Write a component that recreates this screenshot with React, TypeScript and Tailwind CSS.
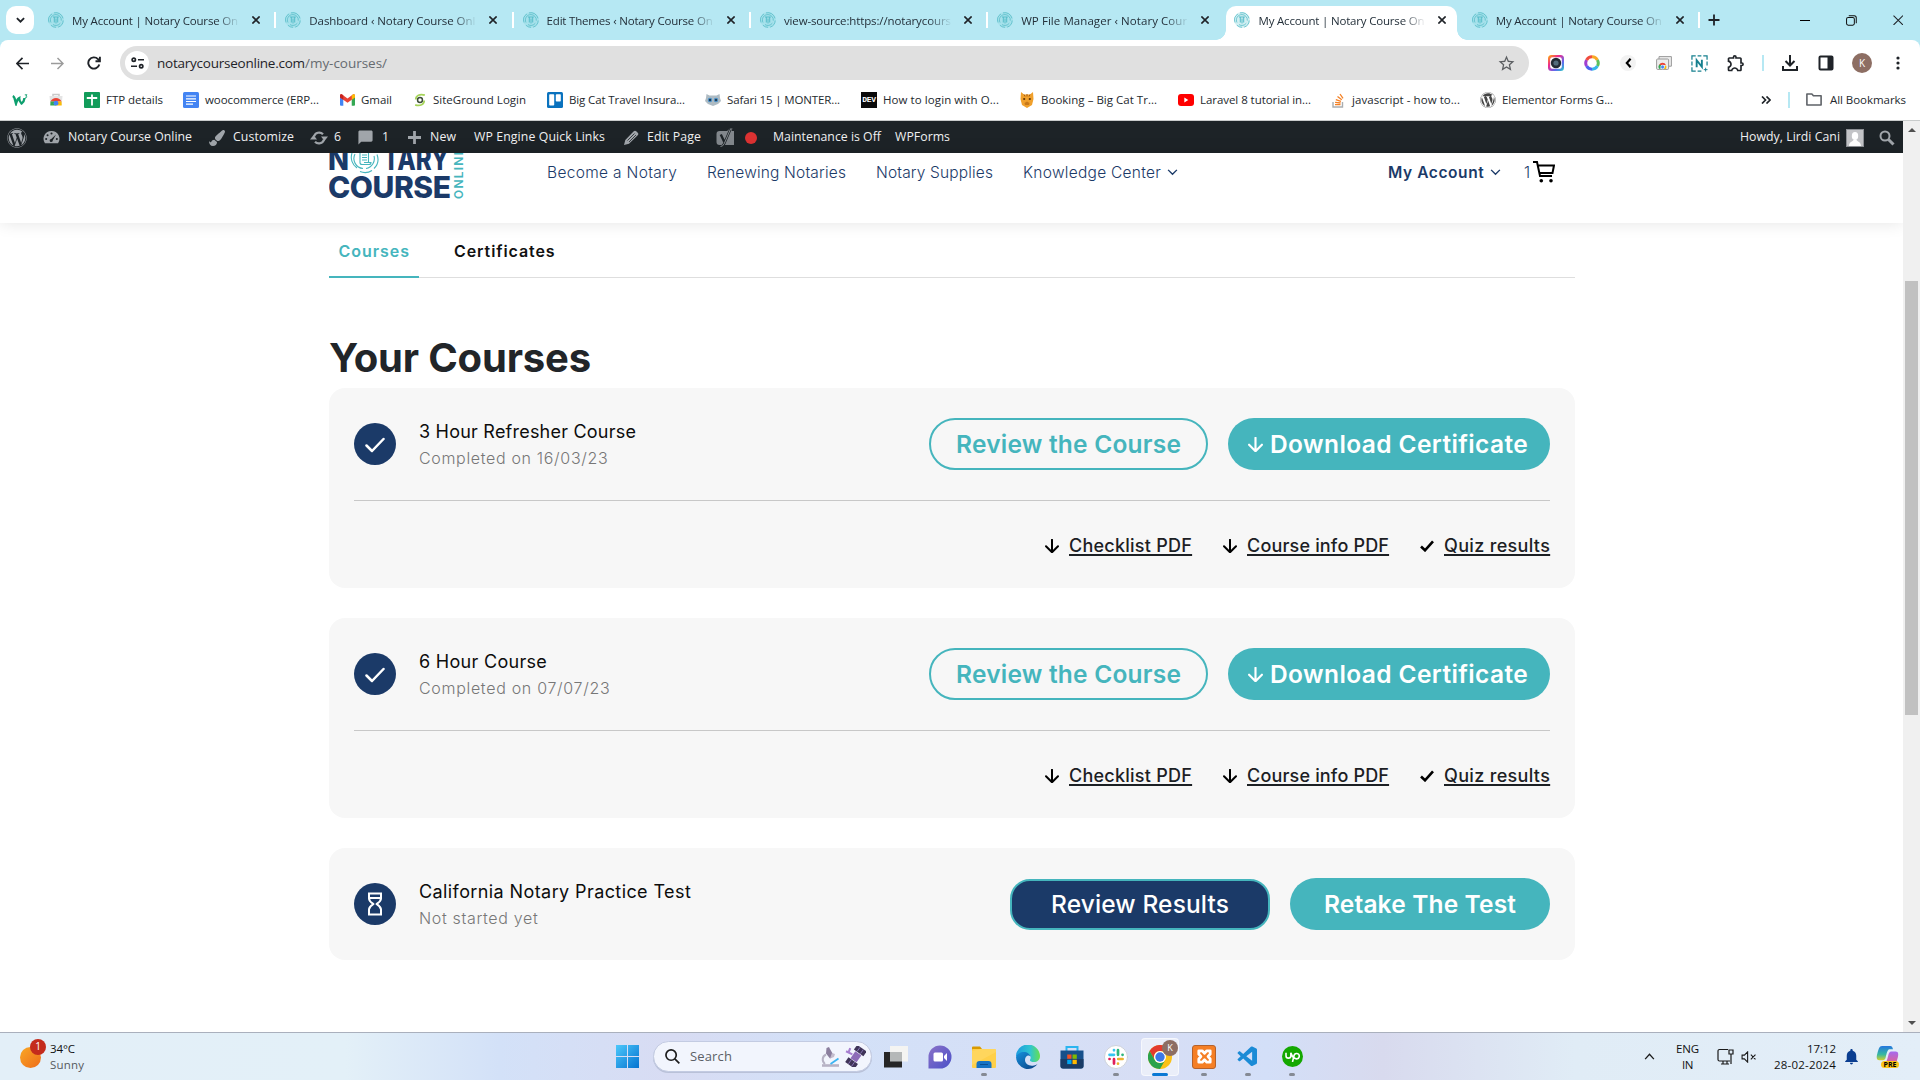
import { useLayoutEffect, useRef, type ReactNode } from "react";
import { FaWordpress, FaPaintBrush } from "react-icons/fa";
import { MdModeComment, MdOutlineExtension, MdStarBorder, MdNotifications } from "react-icons/md";
import { VscVscode } from "react-icons/vsc";

/** Single-line label whose tracking is adjusted so that it spans `w` pixels. */
function Fit({ w, className = "", children }: { w: number; className?: string; children: ReactNode }) {
  const ref = useRef<HTMLSpanElement>(null);
  useLayoutEffect(() => {
    const el = ref.current;
    if (!el) return;
    el.style.width = "max-content";
    el.style.letterSpacing = "0px";
    const natural = el.getBoundingClientRect().width;
    const n = (el.textContent ?? "").length;
    el.style.letterSpacing = `${(w - natural) / Math.max(1, n - 0.5)}px`;
    el.style.width = `${w}px`;
  }, [w]);
  return (
    <span ref={ref} className={"inline-block shrink-0 whitespace-nowrap " + className}>
      {children}
    </span>
  );
}

function Fingerprint() {
  return (
    <svg viewBox="0 0 16 16" className="h-4 w-4 shrink-0" fill="none" stroke="#55bcc8" strokeWidth="0.8">
      <circle cx="8" cy="8" r="7.9" fill="#8fd6de" stroke="none" opacity=".4" />
      <path d="M1 10.5A7.3 7.3 0 0 1 4 1.9M6 .9a7.3 7.3 0 0 1 9 5.500M15.200 8.500a7.300 7.300 0 0 1-5 6.600M8 15.300a7.300 7.300 0 0 1-5-2" />
      <path d="M3 10.500A5.400 5.400 0 0 1 8 2.600a5.400 5.400 0 0 1 5.300 6M12.300 11.200A5.400 5.400 0 0 1 5 12.600" />
      <path d="M5 5h5.800M6.300 5v5.500M9.700 5v5.500M8 6.500v5" strokeWidth="1" />
    </svg>
  );
}

function X({ size = 8 }: { size?: number }) {
  return (
    <svg viewBox="0 0 10 10" width={size} height={size} stroke="#1f2328" strokeWidth={size > 9 ? 1 : 2} fill="none">
      <path d="M.5.5l9 9M9.500.5l-9 9" />
    </svg>
  );
}

const tabs = [
  { t: "My Account | Notary Course On", w: 166, sep: true },
  { t: "Dashboard ‹ Notary Course Onl", w: 166, sep: true },
  { t: "Edit Themes ‹ Notary Course On", w: 166, sep: true },
  { t: "view-source:https://notarycours", w: 167, sep: true },
  { t: "WP File Manager ‹ Notary Cour", w: 166 },
  { t: "My Account | Notary Course On", w: 166, active: true },
  { t: "My Account | Notary Course On", w: 166, sep: true },
];

function TabStrip() {
  return (
    <div className="flex h-10 bg-[#b6e8f3] pl-1.5">
      <div className="mt-1.5 mr-1.5 flex h-7 w-7 shrink-0 items-center justify-center rounded-[10px] bg-white">
        <svg viewBox="0 0 10 6" className="h-[6px] w-[9px]" fill="none" stroke="#1f2328" strokeWidth="2">
          <path d="M1 .8l4 4 4-4" />
        </svg>
      </div>
      {tabs.map((tab, i) => (
        <div key={i} className="flex h-10 w-[237.3px] shrink-0 pt-1.5">
          <div
            className={
              "relative flex w-[230.4px] items-center pb-1.5 pl-2 " + (tab.active ? "rounded-t-[10px] bg-white" : "")
            }
          >
            {tab.active && (
              <>
                <span className="absolute bottom-0 -left-2.5 h-2.5 w-2.5 bg-[radial-gradient(circle_at_0_0,transparent_9.5px,white_10px)]" />
                <span className="absolute -right-2.5 bottom-0 h-2.5 w-2.5 bg-[radial-gradient(circle_at_100%_0,transparent_9.5px,white_10px)]" />
              </>
            )}
            <Fingerprint />
            <div className="ml-2 w-[168px] pt-px text-[11.5px] leading-4 text-[#24303a] [mask-image:linear-gradient(to_right,black_86%,transparent)]">
              <Fit w={tab.w}>{tab.t}</Fit>
            </div>
            <span className="ml-3">
              <X />
            </span>
          </div>
          {tab.sep && <div className="mt-1.5 ml-1 h-4 w-0.5 bg-white" />}
        </div>
      ))}
      <svg viewBox="0 0 12 12" className="mt-3.5 ml-[7px] h-3 w-3 shrink-0" stroke="#1f2328" strokeWidth="1.8">
        <path d="M6 .5v11M.5 6h11" />
      </svg>
      <div className="ml-auto flex h-10 items-center pr-[17px]">
        <div className="h-px w-2.5 bg-black" />
        <svg viewBox="0 0 12 12" className="ml-9 h-[11px] w-[11px]" fill="none" stroke="#111" strokeWidth="1.1">
          <rect x=".6" y="2.6" width="8.5" height="8.6" rx="1.8" />
          <path d="M3 .7h6a2.2 2.2 0 0 1 2.2 2.2v6" />
        </svg>
        <span className="ml-9 block">
          <X size={10.5} />
        </span>
      </div>
    </div>
  );
}

function Toolbar() {
  return (
    <div className="bg-[#b6e8f3]">
      <div className="flex h-[41px] items-center rounded-t-lg bg-white pt-[5px] pl-4">
        <svg viewBox="0 0 14 14" className="h-[13px] w-[13px]" fill="none" stroke="#1f2328" strokeWidth="1.8">
          <path d="M14 7H1.500M7 1L1 7l6 6" />
        </svg>
        <svg viewBox="0 0 14 14" className="ml-[22px] h-[13px] w-[13px]" fill="none" stroke="#9b9b9b" strokeWidth="1.6">
          <path d="M0 7h12.500M7 1l6 6-6 6" />
        </svg>
        <svg viewBox="0 0 14 14" className="ml-[23px] h-[14px] w-[14px]" fill="none" stroke="#1f2328" strokeWidth="1.9">
          <path d="M12.300 8.500A5.600 5.600 0 1 1 11 3.200l1.500 1.600" />
          <path d="M12.900.8v4.500H8.500" />
        </svg>
        <div className="ml-[19px] flex h-[34px] w-[1409px] shrink-0 items-center rounded-full bg-[#e0e0e0] pl-[5px]">
          <div className="flex h-6 w-6 items-center justify-center rounded-full bg-white">
            <svg viewBox="0 0 14 12" className="h-3 w-[13px]" fill="none" stroke="#1f2328" strokeWidth="1.8">
              <circle cx="3" cy="2.5" r="1.8" />
              <path d="M7.500 2.500H14M0 9.500h6.500" />
              <circle cx="11" cy="9.5" r="1.8" />
            </svg>
          </div>
          <Fit w={148} className="ml-2 text-[13.5px] text-[#1f2328]">
            notarycourseonline.com
          </Fit>
          <Fit w={82} className="text-[13.5px] text-[#666b70]">
            /my-courses/
          </Fit>
          <MdStarBorder className="mr-[13px] ml-auto h-[19px] w-[19px] text-[#5c5f62]" />
        </div>
        <div className="ml-[19px] flex items-center">
          <svg viewBox="0 0 16 16" className="h-4 w-4">
            <defs>
              <linearGradient id="cam" x1="0" y1="0" x2="1" y2="1">
                <stop offset="0" stopColor="#ffb300" />
                <stop offset=".35" stopColor="#f0278c" />
                <stop offset=".7" stopColor="#5e6cf0" />
                <stop offset="1" stopColor="#25d0c0" />
              </linearGradient>
            </defs>
            <rect width="16" height="16" rx="3.5" fill="url(#cam)" />
            <rect x="2.2" y="2.2" width="11.6" height="11.6" rx="2" fill="#fff" />
            <circle cx="8" cy="8" r="5.2" fill="#222a35" />
            <circle cx="8" cy="8" r="2.6" fill="#536b7c" />
          </svg>
          <svg viewBox="0 0 16 16" className="ml-5 h-4 w-4" fill="none" strokeWidth="3">
            <path d="M8 1.800a6.200 6.200 0 0 1 5.400 3.100" stroke="#f9a825" />
            <path d="M13.400 4.900a6.200 6.200 0 0 1 0 6.200" stroke="#5cc05c" />
            <path d="M13.400 11.100A6.200 6.200 0 0 1 8 14.200" stroke="#37b6e8" />
            <path d="M8 14.200a6.200 6.200 0 0 1-5.400-3.100" stroke="#4a63f0" />
            <path d="M2.600 11.100a6.200 6.200 0 0 1 0-6.200" stroke="#a13fd0" />
            <path d="M2.600 4.900A6.200 6.200 0 0 1 8 1.800" stroke="#f04c3e" />
          </svg>
          <div className="ml-5 flex h-4 w-4 items-center justify-center rounded-full bg-[#f2f2f2]">
            <svg viewBox="0 0 8 12" className="h-2.5 w-[7px]" fill="none" stroke="#000" strokeWidth="2.6">
              <path d="M6.500 1L2 6l4.500 5" />
            </svg>
          </div>
          <svg viewBox="0 0 16 14" className="ml-5 h-[14px] w-4" fill="none" stroke="#9a9a9a">
            <path d="M3 3V.6h12.400v9.600H13" fill="#eee" />
            <rect x=".6" y="3" width="12" height="10.400" rx="1" fill="#ededed" />
            <path d="M3.200 12.900a3.400 3.400 0 0 1 1-4.800l2.400 3.500z" fill="#34a853" stroke="none" />
            <path d="M3.200 9a3.600 3.600 0 0 1 6.700 0z" fill="#ea4335" stroke="none" />
            <path d="M9.900 9a4 4 0 0 1 0 4H7z" fill="#fbbc04" stroke="none" />
            <circle cx="6.600" cy="11" r="1.900" fill="#4285f4" stroke="#fff" strokeWidth=".6" />
          </svg>
          <svg viewBox="0 0 18 18" className="ml-[19px] h-[17px] w-[17px]" fill="none" stroke="#16808f">
            <path d="M1 5V1h4M7 1h4M13 1h4v4M17 7v4M1 7v4M1 13v4h4M7 17h4" strokeWidth="1.3" />
            <path d="M6 13V5.500l5.500 7V5" strokeWidth="2" />
            <path d="M15.500 13.500v4M13.500 15.500h4" strokeWidth="1" />
          </svg>
          <MdOutlineExtension className="ml-[18px] h-5 w-5 text-[#1f2328]" />
          <div className="ml-4 h-4 w-0.5 bg-[#b6e8f3]" />
          <svg viewBox="0 0 16 16" className="ml-[18px] h-4 w-4" fill="none" stroke="#1f2328" strokeWidth="2">
            <path d="M8 0v10M3.500 6L8 10.500 12.500 6M1 11v4h14v-4" />
          </svg>
          <svg viewBox="0 0 16 16" className="ml-5 h-4 w-4">
            <rect x="1.5" y="1.5" width="13" height="13" rx="1" fill="none" stroke="#1f2328" strokeWidth="2" />
            <path d="M9.500 1.500h5v13h-5z" fill="#1f2328" />
          </svg>
          <div className="ml-[18px] flex h-5 w-5 items-center justify-center rounded-full bg-[#8d6e63] text-[10px] text-white">
            K
          </div>
          <svg viewBox="0 0 4 14" className="ml-6 h-3.5 w-1" fill="#1f2328">
            <circle cx="2" cy="2" r="1.6" />
            <circle cx="2" cy="7" r="1.6" />
            <circle cx="2" cy="12" r="1.6" />
          </svg>
        </div>
      </div>
    </div>
  );
}

const GmailIcon = (
  <svg viewBox="0 0 16 12" className="h-3 w-[15px]">
    <path d="M0 1.500V11a1 1 0 0 0 1 1h2.500V4z" fill="#4285f4" />
    <path d="M16 1.500V11a1 1 0 0 1-1 1h-2.500V4z" fill="#34a853" />
    <path d="M0 1.500C0 0 1.600-.4 2.600.4L8 4.500 13.400.4C14.400-.4 16 0 16 1.500v1.700L8 9 0 3.200z" fill="#ea4335" />
    <path d="M12.500 1.100l.9-.7C14.400-.4 16 0 16 1.500v1.700l-3.500 2.500z" fill="#fbbc04" />
    <path d="M0 1.500C0 0 1.600-.4 2.600.4l.9.700v4.600L0 3.200z" fill="#c5221f" />
  </svg>
);

const bookmarks: { gap: string; icon: ReactNode; label?: string; w?: number }[] = [
  {
    gap: "ml-3",
    icon: (
      <svg viewBox="0 0 16 12" className="h-3 w-4" fill="none" stroke="#0d9f6e" strokeWidth="2.4">
        <path d="M.8 2C3 3 2.800 6 4 9.500 5 6 6 4.500 7.200 4 7 6 8 8 9.500 9.500 11.500 8 12.300 6.500 12.500 4" />
        <path d="M12.800.8h2.200L13.800 2.100c1.500 0 1.500 2-.8 1.700" strokeWidth=".9" />
      </svg>
    ),
  },
  {
    gap: "ml-5",
    icon: (
      <svg viewBox="0 0 16 16" className="h-4 w-4">
        <path d="M5 5V2.500h6V5" fill="none" stroke="#c9c9c9" strokeWidth="1.5" />
        <path d="M1.500 4h13l-.8 9h-11.400z" fill="#e4e4e4" />
        <path d="M2.500 9.500a6 6 0 0 1 11 0z" fill="#ea4335" />
        <path d="M2.500 9.500h4L8 13.500H2.300z" fill="#34a853" />
        <path d="M13.500 9.500h-4l-2 4h6.200z" fill="#fbbc04" />
        <circle cx="8" cy="11.2" r="2.4" fill="#4285f4" />
      </svg>
    ),
  },
  {
    gap: "ml-5",
    icon: (
      <svg viewBox="0 0 16 16" className="h-4 w-4">
        <rect width="16" height="16" rx="1" fill="#129c5a" />
        <path d="M8 2.500v11M2.800 6h10.400" stroke="#fff" strokeWidth="1.8" />
      </svg>
    ),
    label: "FTP details",
    w: 57,
  },
  {
    gap: "ml-5",
    icon: (
      <svg viewBox="0 0 16 16" className="h-4 w-4">
        <rect width="16" height="16" rx="1.5" fill="#4384f3" />
        <path d="M3 4h10M3 6.800h10M3 9.500h10M3 12.200h7" stroke="#fff" strokeWidth="1.2" />
      </svg>
    ),
    label: "woocommerce (ERP...",
    w: 114,
  },
  { gap: "ml-[21px]", icon: GmailIcon, label: "Gmail", w: 31 },
  {
    gap: "ml-[21px]",
    icon: (
      <svg viewBox="0 0 16 16" className="h-[14px] w-[14px]" fill="none">
        <path d="M13.500 2.500C8 .5 3 3 3.200 7.500M2.500 13.500c5.500 2 10.500-.5 10.300-5" stroke="#a6d45a" strokeWidth="2" />
        <circle cx="8" cy="8" r="2.800" stroke="#3d4c3a" strokeWidth="1.700" />
      </svg>
    ),
    label: "SiteGround Login",
    w: 93,
  },
  {
    gap: "ml-[21px]",
    icon: (
      <svg viewBox="0 0 16 16" className="h-4 w-4">
        <rect width="16" height="16" rx="1.5" fill="#0a72be" />
        <rect x="2.2" y="2.2" width="5" height="11.4" rx=".8" fill="#fff" />
        <rect x="8.8" y="2.2" width="5" height="7.4" rx=".8" fill="#fff" />
      </svg>
    ),
    label: "Big Cat Travel Insura...",
    w: 116,
  },
  {
    gap: "ml-5",
    icon: (
      <svg viewBox="0 0 16 12" className="h-3 w-4">
        <path d="M1.500 0l3 1.500h7l3-1.500.5 4 1 3-3 3-5 2-5-2-3-3 1-3z" fill="#aebbc3" />
        <circle cx="5" cy="6" r="2.2" fill="#4b8fc5" />
        <circle cx="11" cy="6" r="2.2" fill="#4b8fc5" />
        <circle cx="5" cy="6" r="1" fill="#17232c" />
        <circle cx="11" cy="6" r="1" fill="#17232c" />
      </svg>
    ),
    label: "Safari 15 | MONTER...",
    w: 113,
  },
  {
    gap: "ml-[21px]",
    icon: (
      <span className="flex h-4 w-4 items-center justify-center bg-[#0a0a0a] font-['Liberation_Mono',monospace] text-[8px] font-bold tracking-[-0.3px] text-white">
        DEV
      </span>
    ),
    label: "How to login with O...",
    w: 116,
  },
  {
    gap: "ml-5",
    icon: (
      <svg viewBox="0 0 16 16" className="h-4 w-4">
        <path d="M2 0l3 2.500h6L14 0l.5 7-1.500 6-5 3-5-3L1.500 7z" fill="#f0a02c" />
        <path d="M5 2.500l1 2M8 2v2.500M11 2.500l-1 2" stroke="#a85c10" />
        <circle cx="5.200" cy="7" r="1.100" fill="#5b3206" />
        <circle cx="10.800" cy="7" r="1.100" fill="#5b3206" />
        <path d="M5.500 11l2.500-1.500 2.500 1.500L10 13H6z" fill="#c87818" />
      </svg>
    ),
    label: "Booking – Big Cat Tr...",
    w: 116,
  },
  {
    gap: "ml-[21px]",
    icon: (
      <svg viewBox="0 0 16 12" className="h-3 w-4">
        <rect width="16" height="12" rx="3" fill="#f00" />
        <path d="M6.300 3.500v5l4-2.500z" fill="#fff" />
      </svg>
    ),
    label: "Laravel 8 tutorial in...",
    w: 111,
  },
  {
    gap: "ml-[19px]",
    icon: (
      <svg viewBox="0 0 16 16" className="h-4 w-4" fill="none">
        <path d="M3 10v5h9.500v-5" stroke="#a9adb0" strokeWidth="1.4" />
        <path d="M5 12.700h5.500M5.100 10.300l5.500.7M5.800 7.600l5.200 1.700M7.500 4.600l4.300 3.200M10 2l3 4.400" stroke="#f48024" strokeWidth="1.3" />
      </svg>
    ),
    label: "javascript - how to...",
    w: 108,
  },
  {
    gap: "ml-5",
    icon: <FaWordpress className="h-4 w-4 text-[#464646]" />,
    label: "Elementor Forms G...",
    w: 111,
  },
];

function Bookmarks() {
  return (
    <div className="flex h-10 items-center border-b border-[#c9cccc] bg-white pb-[2px] text-[11.5px] text-[#24292e]">
      {bookmarks.map((b, i) => (
        <div key={i} className={"flex shrink-0 items-center " + b.gap}>
          {b.icon}
          {b.label && (
            <Fit w={b.w ?? 0} className="ml-1.5 leading-4">
              {b.label}
            </Fit>
          )}
        </div>
      ))}
      <svg viewBox="0 0 10 8" className="mr-[17px] ml-auto h-2 w-2.5" fill="none" stroke="#1f2328" strokeWidth="1.7">
        <path d="M1 .5L4.500 4 1 7.500M5.500.5L9 4 5.500 7.500" />
      </svg>
      <div className="mr-4 h-4 w-0.5 bg-[#b6e8f3]" />
      <svg viewBox="0 0 16 13" className="mr-2 h-[13px] w-4" fill="none" stroke="#5f6368" strokeWidth="1.6">
        <path d="M.9 1h5l1.500 1.700h7.700V12H.9z" strokeLinejoin="round" />
      </svg>
      <Fit w={76} className="mr-3.5 leading-4">
        All Bookmarks
      </Fit>
    </div>
  );
}

function AdminBar() {
  return (
    <div className="flex h-8 shrink-0 items-center bg-[#1d2327] pt-px text-[12.3px] text-[#f0f0f1]">
      <FaWordpress className="ml-[7px] h-5 w-5 text-[#a0a5aa]" />
      <svg viewBox="0 0 18 16" className="ml-4 h-[15px] w-[17px]">
        <path d="M9 1a8.300 8.300 0 0 0-7 13h14A8.300 8.300 0 0 0 9 1z" fill="#a0a5aa" />
        <g fill="#1d2327">
          <circle cx="9" cy="3.8" r="1.1" />
          <circle cx="4.8" cy="5.5" r="1.1" />
          <circle cx="3.3" cy="9.5" r="1.1" />
          <circle cx="14.7" cy="9.5" r="1.1" />
          <path d="M13.800 4.800L10.400 11a1.700 1.700 0 1 1-1.700-1.500z" />
        </g>
      </svg>
      <Fit w={124} className="ml-2">Notary Course Online</Fit>
      <FaPaintBrush className="ml-[17px] h-4 w-4 text-[#a0a5aa]" />
      <Fit w={61} className="ml-2">Customize</Fit>
      <svg viewBox="0 0 18 16" className="ml-4 h-4 w-[18px]" fill="none" stroke="#a0a5aa" strokeWidth="2.2">
        <path d="M4 6.500A5.300 5.300 0 0 1 13 4.300M14 9.500a5.300 5.300 0 0 1-9 2.200" />
        <path d="M0 9.500h7L3.500 5zM18 6.500h-7l3.500 4.500z" fill="#a0a5aa" stroke="none" />
      </svg>
      <Fit w={7} className="ml-1.5">6</Fit>
      <MdModeComment className="ml-4 h-[17px] w-[17px] -scale-x-100 text-[#a0a5aa]" />
      <Fit w={7} className="ml-2">1</Fit>
      <svg viewBox="0 0 14 14" className="ml-[19px] h-[13px] w-[13px]" stroke="#a0a5aa" strokeWidth="3">
        <path d="M7 0v14M0 7h14" />
      </svg>
      <Fit w={26} className="ml-[9px]">New</Fit>
      <Fit w={131} className="ml-[18px]">WP Engine Quick Links</Fit>
      <svg viewBox="0 0 16 16" className="ml-[18px] h-[16px] w-[16px]">
        <path d="M1 15l1.300-5L10.500 1.500a2 2 0 0 1 3 0l1 1a2 2 0 0 1 0 3L6 13.700z" fill="#a0a5aa" />
        <path d="M4.500 10.500l7-7M6 12l7-7" stroke="#1d2327" strokeWidth=".8" />
      </svg>
      <Fit w={54} className="ml-2">Edit Page</Fit>
      <svg viewBox="0 0 18 20" className="ml-[15px] h-5 w-[18px]">
        <path d="M3.500 3H11L14 .5h2.500L15.500 3H18v14H3.500A3 3 0 0 1 .5 14V6a3 3 0 0 1 3-3z" fill="#82878c" />
        <path d="M4.800 6.500l3.500 7.500M14.500 1L8.300 15.500Q7 18.500 4.500 18.500" fill="none" stroke="#1d2327" strokeWidth="2.400" />
        <path d="M14.500 1L8.300 15.500Q7 18.500 4.500 18.500" fill="none" stroke="#a0a5aa" strokeWidth=".8" />
      </svg>
      <div className="ml-[11px] h-3 w-3 rounded-full bg-[#dc3232]" />
      <Fit w={108} className="ml-4">Maintenance is Off</Fit>
      <Fit w={55} className="ml-3.5">WPForms</Fit>
      <Fit w={100} className="ml-auto">Howdy, Lirdi Cani</Fit>
      <div className="ml-1.5 flex h-[18px] w-[18px] items-end justify-center border border-[#8c8f94] bg-[#c3c4c7]">
        <svg viewBox="0 0 14 15" className="h-[15px] w-[14px]" fill="#fff">
          <ellipse cx="7" cy="5" rx="3.2" ry="4" />
          <path d="M1 15c0-4 3-4 4.500-6h3C10 11 13 11 13 15z" />
        </svg>
      </div>
      <svg viewBox="0 0 16 16" className="mr-2 ml-[15px] h-[16px] w-[16px]" fill="none" stroke="#a0a5aa">
        <circle cx="6" cy="6" r="4.5" strokeWidth="2" />
        <path d="M9.500 9.500l5 5" strokeWidth="3" />
      </svg>
    </div>
  );
}

function Chevron() {
  return (
    <svg viewBox="0 0 12 8" className="ml-1.5 h-[7px] w-[11px]" fill="none" stroke="#1b3a68" strokeWidth="1.6">
      <path d="M1 1l5 5 5-5" />
    </svg>
  );
}

function SiteHeader() {
  return (
    <div className="relative z-10 flex h-[70px] shrink-0 items-start overflow-hidden bg-white pl-[329px] text-[15.5px] text-[#1b3a68] shadow-[0_0_16px_rgba(0,0,0,0.11)]">
      <svg viewBox="0 0 138 50" className="h-[50px] w-[138px] shrink-0" fill="#1b3a68">
        <g fontSize="30" fontWeight="800" fontFamily="Inter, sans-serif">
          <text x="-1" y="17" textLength="21" lengthAdjust="spacingAndGlyphs">N</text>
          <text x="54" y="17" textLength="66" lengthAdjust="spacingAndGlyphs">TARY</text>
          <text x="-1" y="45" textLength="123" lengthAdjust="spacing">COURSE</text>
        </g>
        <g fill="none" stroke="#45b5bd" strokeWidth="1.1">
          <path d="M23 0a13 13 0 0 0 5 15M31 18.500a13 13 0 0 0 12-1M45 15.500a13 13 0 0 0 3-14M26 1a10 10 0 0 0 8 14.500M37 15.500A10 10 0 0 0 45 3" />
          <path d="M31 0v9.500a2 2 0 0 0 2 2h7a2 2 0 0 0 2-2H35M39.500 9V0M33 2h5M33 4.500h5M33 7h5" />
        </g>
        <text
          transform="translate(134 46) rotate(-90)"
          fontSize="12"
          fontWeight="600"
          fontFamily="Inter, sans-serif"
          fill="#45b5bd"
          textLength="51"
        >
          ONLINE
        </text>
      </svg>
      <div className="flex h-[39px] items-center pl-[80px]">
        <Fit w={130} className="font-light">Become a Notary</Fit>
        <Fit w={139} className="ml-[30px] font-light">Renewing Notaries</Fit>
        <Fit w={117} className="ml-[30px] font-light">Notary Supplies</Fit>
        <Fit w={138} className="ml-[30px] font-light">Knowledge Center</Fit>
        <Chevron />
        <Fit w={96} className="ml-[210px] font-semibold">My Account</Fit>
        <Chevron />
        <span className="ml-[23px] w-[9px] font-light">1</span>
        <svg viewBox="0 0 22 22" className="-mt-0.5 h-[22px] w-[22px]" fill="none" stroke="#000" strokeWidth="2">
          <path d="M0 1h4l3 14h12M4.500 4.500H21L19.500 12H6.500" />
          <circle cx="8.3" cy="19.8" r="1.8" fill="#000" stroke="none" />
          <circle cx="18" cy="19.8" r="1.8" fill="#000" stroke="none" />
        </svg>
      </div>
    </div>
  );
}

function Arrow({ stroke, size }: { stroke: string; size: number }) {
  return (
    <svg
      viewBox="0 0 14 14"
      width={size}
      height={size}
      fill="none"
      stroke={stroke}
      strokeWidth="2"
      strokeLinejoin="round"
      strokeLinecap="round"
      className="shrink-0"
    >
      <path d="M7 .8v12M1 7.200l6 6 6-6" />
    </svg>
  );
}

type Titles = { title: string; tw: number; sub: string; sw: number };

function CourseTitle({ title, tw, sub, sw, pending }: Titles & { pending?: boolean }) {
  return (
    <>
      <div className="flex h-[42px] w-[42px] shrink-0 items-center justify-center rounded-full bg-[#1b3a68]">
        {pending ? (
          <svg viewBox="0 0 16 24" className="h-6 w-4" fill="none" stroke="#fff" strokeWidth="2" strokeLinejoin="round">
            <path d="M1 1.500h14M1 22.500h14M2 1.500v5C2 9.500 5 11 6.500 12 5 13 2 14.500 2 17.500v5M14 1.500v5c0 3-3 4.500-4.500 5.500 1.500 1 4.500 2.500 4.500 5.500v5M2.500 6h11" />
          </svg>
        ) : (
          <svg viewBox="0 0 20 16" className="mt-0.5 h-4 w-5" fill="none" stroke="#fff" strokeWidth="2.5" strokeLinecap="round" strokeLinejoin="round">
            <path d="M1.500 8.500L7 14 18.500 2" />
          </svg>
        )}
      </div>
      <div className="ml-[23px] flex flex-col items-start pt-0.5">
        <Fit w={tw} className="text-[18px] leading-[26px] text-[#0c0c0c]">{title}</Fit>
        <Fit w={sw} className="text-[16px] leading-[26px] font-light text-[#777]">{sub}</Fit>
      </div>
    </>
  );
}

function CourseCard({ title, tw, sub, sw }: Titles) {
  return (
    <div className="mb-[30px] h-[200px] rounded-2xl bg-[#f7f7f7] px-[25px]">
      <div className="flex h-[113px] items-center border-b border-[#c8c8c8]">
        <CourseTitle title={title} tw={tw} sub={sub} sw={sw} />
        <div className="ml-auto flex h-[52px] w-[279px] items-center justify-center rounded-full border-2 border-[#45b5bd] text-[24.5px] font-semibold text-[#45b5bd]">
          <Fit w={225}>Review the Course</Fit>
        </div>
        <div className="ml-5 flex h-[52px] w-[322px] items-center rounded-full bg-[#45b5bd] pl-5 text-[24.5px] font-semibold text-white">
          <Arrow stroke="#fff" size={15} />
          <Fit w={258} className="ml-[7px]">Download Certificate</Fit>
        </div>
      </div>
      <div className="flex h-[88px] items-center justify-end pt-px text-[18px] font-medium text-[#1c2024]">
        <Arrow stroke="#000" size={14} />
        <Fit w={123} className="ml-[10px] underline decoration-[1.5px] underline-offset-[2px]">Checklist PDF</Fit>
        <span className="w-[31px]" />
        <Arrow stroke="#000" size={14} />
        <Fit w={142} className="ml-[10px] underline decoration-[1.5px] underline-offset-[2px]">Course info PDF</Fit>
        <svg viewBox="0 0 14 12" className="mr-[10px] ml-[31px] h-3 w-3.5" fill="none" stroke="#000" strokeWidth="2.6">
          <path d="M1 6.500L5 10.300 13 1.300" />
        </svg>
        <Fit w={106} className="underline decoration-[1.5px] underline-offset-[2px]">Quiz results</Fit>
      </div>
    </div>
  );
}

function Page() {
  return (
    <div className="flex h-[911px]">
      <div className="flex w-[1903px] flex-col overflow-hidden bg-white">
        <AdminBar />
        <div className="flex flex-1 flex-col font-[Inter,sans-serif]">
          <SiteHeader />
          <div className="mx-[329px] w-[1246px]">
            <div className="flex h-[55px] border-b border-[#dedede] text-[16px] font-semibold">
              <div className="-mb-px flex w-[90px] border-b-2 border-[#45b5bd] pt-4 pl-[9.5px] text-[#45b5bd]">
                <Fit w={71}>Courses</Fit>
              </div>
              <Fit w={101} className="ml-[35px] pt-4 text-[#111]">Certificates</Fit>
            </div>
            <h1 className="mt-[52px] h-[58px] text-[40px] leading-[56px] font-bold text-[#212529]">
              <Fit w={262}>Your Courses</Fit>
            </h1>
            <CourseCard title="3 Hour Refresher Course" tw={217} sub="Completed on 16/03/23" sw={189} />
            <CourseCard title="6 Hour Course" tw={128} sub="Completed on 07/07/23" sw={191} />
            <div className="flex h-[112px] items-center rounded-2xl bg-[#f7f7f7] px-[25px]">
              <CourseTitle title="California Notary Practice Test" tw={272} sub="Not started yet" sw={119} pending />
              <div className="mt-px ml-auto flex h-[51px] w-[260px] items-center justify-center rounded-[20px] border-2 border-[#45b5bd] bg-[#1b3a68] pb-px text-[24.5px] font-medium text-white">
                <Fit w={178}>Review Results</Fit>
              </div>
              <div className="ml-5 flex h-[52px] w-[260px] items-center justify-center rounded-full bg-[#45b5bd] text-[24.5px] font-semibold text-white">
                <Fit w={192}>Retake The Test</Fit>
              </div>
            </div>
          </div>
        </div>
      </div>
      <div className="flex w-[17px] flex-col items-center bg-[#f0f0f0]">
        <svg viewBox="0 0 8 4" className="mt-[7px] h-1 w-2" fill="#505050">
          <path d="M0 4l4-4 4 4z" />
        </svg>
        <div className="mt-[149px] h-[434px] w-[13px] bg-[#c1c1c1]" />
        <svg viewBox="0 0 8 4" className="mt-auto mb-[7px] h-1 w-2" fill="#505050">
          <path d="M0 0l4 4 4-4z" />
        </svg>
      </div>
    </div>
  );
}

function ChromeLogo() {
  return (
    <svg viewBox="0 0 24 24" className="h-6 w-6">
      <circle cx="12" cy="12" r="12" fill="#fbc116" />
      <path d="M1.600 6A12 12 0 0 1 22.400 6H12a6 6 0 0 0-5.200 9z" fill="#e33b2e" />
      <path d="M1.600 6a12 12 0 0 0 10.400 18l5.200-9A6 6 0 0 1 6.800 15z" fill="#2ba24c" />
      <circle cx="12" cy="12" r="6" fill="#fff" />
      <circle cx="12" cy="12" r="4.7" fill="#3b78e7" />
    </svg>
  );
}

const apps: { icon: ReactNode; running?: boolean; active?: boolean }[] = [
  {
    icon: (
      <svg viewBox="0 0 24 24" className="h-6 w-6">
        <path d="M6 1h18v15.500H6z" fill="#f4f4f2" />
        <path d="M0 7h18v15.500H0z" fill="#262626" />
        <path d="M6 7h12v9.500H6z" fill="#b5b8b8" />
      </svg>
    ),
  },
  {
    icon: (
      <svg viewBox="0 0 24 24" className="h-6 w-6">
        <defs>
          <linearGradient id="chat" x1="0" y1="0" x2="1" y2="1">
            <stop offset="0" stopColor="#8b72c8" />
            <stop offset="1" stopColor="#4a50c8" />
          </linearGradient>
        </defs>
        <path d="M.5 23.500V12a11.500 11.500 0 1 1 11.500 11.500z" fill="url(#chat)" />
        <rect x="5.500" y="7.500" width="9.500" height="9" rx="1.500" fill="#fff" />
        <path d="M16 11l3-3v8l-3-3z" fill="#fff" />
      </svg>
    ),
  },
  {
    running: true,
    icon: (
      <svg viewBox="0 0 24 24" className="h-6 w-6">
        <path d="M0 2.500a1 1 0 0 1 1-1h7l2 2.500v3H0z" fill="#d99a00" />
        <rect y="4" width="24" height="19" rx="1" fill="#ffd04a" />
        <path d="M0 6l10-2h14v3L0 20z" fill="#ffdb6a" opacity=".6" />
        <path d="M4.500 23v-4a3 3 0 0 1 3-3h9a3 3 0 0 1 3 3v4z" fill="#1673c4" />
        <path d="M8 19.500h8" stroke="#0a4f92" />
      </svg>
    ),
  },
  {
    icon: (
      <svg viewBox="0 0 24 24" className="h-6 w-6">
        <defs>
          <linearGradient id="edgeA" x1="0" y1="0" x2="1" y2="0">
            <stop offset="0" stopColor="#1c9be0" />
            <stop offset=".6" stopColor="#30c5d0" />
            <stop offset="1" stopColor="#66e04f" />
          </linearGradient>
          <linearGradient id="edgeB" x1="0" y1="0" x2="1" y2="1">
            <stop offset="0" stopColor="#1690dd" />
            <stop offset="1" stopColor="#0b3f80" />
          </linearGradient>
        </defs>
        <path d="M0 12a12 12 0 0 1 24-1c0 4-3 6-6 6-2.500 0-4.500-.8-4-2.200C16 12 13.500 8 9 8s-8 2-9 4z" fill="url(#edgeA)" />
        <path d="M0 12c1-3 4.500-5 8-5 3 0 6 2 6.500 4.500C12.500 9.500 9 11 9 15c0 4 4.500 6.500 9 5.500 1.600-.3 3-1 4-2A12 12 0 0 1 0 12z" fill="url(#edgeB)" />
      </svg>
    ),
  },
  {
    icon: (
      <svg viewBox="0 0 24 24" className="h-6 w-6">
        <path d="M6.500 6V2h11v4" fill="none" stroke="#2bb5f0" strokeWidth="2" />
        <path d="M.5 5.500h23V21a2.500 2.500 0 0 1-2.500 2.500H3A2.500 2.500 0 0 1 .5 21z" fill="#17508a" />
        <path d="M.5 14h23v7a2.500 2.500 0 0 1-2.500 2.500H3A2.500 2.500 0 0 1 .5 21z" fill="#1a3c66" />
        <path d="M7.200 9.500h4.300v4.300H7.200z" fill="#f25022" />
        <path d="M12.500 9.500h4.300v4.300h-4.300z" fill="#7fba00" />
        <path d="M7.200 14.800h4.300v4.300H7.200z" fill="#00a4ef" />
        <path d="M12.500 14.800h4.300v4.300h-4.300z" fill="#ffb900" />
      </svg>
    ),
  },
  {
    running: true,
    icon: (
      <svg viewBox="0 0 24 24" className="h-6 w-6" fill="none" strokeLinecap="round" strokeWidth="2.700">
        <circle cx="12" cy="12" r="11.500" fill="#fff" stroke="#c5c9d0" strokeWidth=".8" />
        <path d="M10 5v.3M5.500 9.800H10" stroke="#36c5f0" />
        <path d="M14 5.200v4.600M18.500 9.800h.1" stroke="#2eb67d" />
        <path d="M14.200 14h4.400M14 18.600v.1" stroke="#ecb22e" />
        <path d="M10 14.200v4.400M5.500 14h.1" stroke="#e01e5a" />
      </svg>
    ),
  },
  {
    active: true,
    icon: (
      <>
        <ChromeLogo />
        <span className="absolute top-px right-0 flex h-4 w-4 items-center justify-center rounded-full bg-[#8d6e63] text-[9px] text-white">
          K
        </span>
      </>
    ),
  },
  {
    running: true,
    icon: (
      <span className="flex h-6 w-6 items-center justify-center rounded-[3px] border border-[#b5612a] bg-[#f57f25]">
        <svg viewBox="0 0 18 18" className="h-[17px] w-[17px]" fill="none" stroke="#fff" strokeWidth="3" strokeLinejoin="round" strokeLinecap="round">
          <path d="M3 3h3.500L9 5.500 11.500 3H15v3.500L12.800 9l2.200 2.500V15h-3.500L9 12.500 6.500 15H3v-3.500L5.200 9 3 6.500z" />
        </svg>
      </span>
    ),
  },
  { running: true, icon: <VscVscode className="h-6 w-6 text-[#1b8bd6]" /> },
  {
    running: true,
    icon: (
      <span className="flex h-[21px] w-[21px] items-center justify-center rounded-full bg-[#14a800]">
        <svg viewBox="0 0 18 12" className="h-[10px] w-[15px]" fill="none" stroke="#fff" strokeWidth="1.900">
          <path d="M1.200 1v3.500a2.900 2.900 0 0 0 5.800 0V1c1 3 2.500 5.500 4 6.500M9 12l1.800-7.500a3.200 3.200 0 1 1 3 3.700c-1.500 0-3-1-4-2.500" />
        </svg>
      </span>
    ),
  },
];

function Taskbar() {
  return (
    <div className="flex h-12 items-center border-t border-[#aab0bd] bg-[linear-gradient(90deg,#e3eff8_0%,#e3f0f8_18%,#d3e1f8_26%,#d8dcf3_35%,#d3e1f8_43%,#d7def5_60%,#d3dff8_66%,#d8daee_72%,#e0ecf6_82%,#e3eef8_100%)]">
      <div className="flex w-[616px] items-center pl-5">
        <div className="relative h-6 w-[26px]">
          <div className="mt-0.5 h-[21px] w-[21px] rounded-full bg-[linear-gradient(135deg,#f9a825,#ee6c1a)]" />
          <span className="absolute -top-1.5 left-[10px] flex h-4 w-4 items-center justify-center rounded-full bg-[#c42b1c] text-[10px] text-white">
            1
          </span>
        </div>
        <div className="ml-1 flex flex-col items-start text-[11.5px] leading-4">
          <Fit w={25} className="text-[#111]">34°C</Fit>
          <Fit w={34} className="text-[#55595e]">Sunny</Fit>
        </div>
      </div>
      <svg viewBox="0 0 23 23" className="h-[23px] w-[23px]">
        <defs>
          <linearGradient id="win" x1="0" y1="0" x2="1" y2="1">
            <stop offset="0" stopColor="#4cc8fb" />
            <stop offset="1" stopColor="#0572d0" />
          </linearGradient>
        </defs>
        <path d="M0 0h11v11H0zM12 0h11v11H12zM0 12h11v11H0zM12 12h11v11H12z" fill="url(#win)" />
      </svg>
      <div className="ml-[14px] flex h-[31px] w-[219px] items-center rounded-full border border-[#c3cbe2] bg-[#f2f5fd] pl-[11px] shadow-[0_1px_0_#b9c1d8]">
        <svg viewBox="0 0 16 16" className="h-[15px] w-[15px]" fill="none" stroke="#1c1c1c" strokeWidth="1.8">
          <circle cx="6.500" cy="6.500" r="5.500" />
          <path d="M10.500 10.500l4.800 4.800" />
        </svg>
        <Fit w={42} className="ml-[10px] text-[13px] text-[#5b5f66]">Search</Fit>
        <svg viewBox="0 0 20 20" className="ml-[89px] h-5 w-5" fill="none">
          <path d="M5.500 1l2.500-1 1 2 4 7-4 2.500-4-5z" fill="#8b7f9e" />
          <path d="M11 6l3 1-1 3-4 1.500z" fill="#c3bccd" />
          <path d="M5 7.500a5.500 5.500 0 0 0-1 9.500" stroke="#b6b2c4" strokeWidth="2" />
          <path d="M1 18.500h17" stroke="#b6b2c4" strokeWidth="2.6" />
          <path d="M9.500 17l8-5.500" stroke="#3cb4f2" strokeWidth="1.8" />
        </svg>
        <svg viewBox="0 0 20 20" className="ml-1 h-[21px] w-[21px]">
          <g transform="rotate(35 10 10)">
            <rect x="5" y="0" width="11" height="5.500" fill="#3f3458" />
            <rect x="5" y="14.500" width="11" height="5.500" fill="#3f3458" />
            <rect x="7" y="6" width="7" height="8" fill="#8d6bb8" />
            <path d="M8.500.5v4.500M12.300.5v4.500M8.500 15v4.500M12.300 15v4.500" stroke="#8a78bb" strokeWidth=".8" />
          </g>
          <path d="M1 5l6 3M5 2l-2 5" stroke="#a77fd0" strokeWidth="2" />
        </svg>
      </div>
      <div className="ml-[2px] flex h-full">
        {apps.map((a, i) => (
          <div key={i} className="flex h-full w-11 items-center justify-center">
            <div
              className={
                "relative flex h-[38px] w-[38px] items-center justify-center rounded " +
                (a.active ? "border border-white/60 bg-[#eff1fa]/80" : "")
              }
            >
              {a.icon}
              {a.running && <span className="absolute bottom-0 left-4 h-[3px] w-1.5 rounded-full bg-[#858a94]" />}
              {a.active && <span className="absolute -bottom-px left-[10px] h-[3px] w-4 rounded-full bg-[#0a78d4]" />}
            </div>
          </div>
        ))}
      </div>
      <div className="ml-auto flex items-center pr-[21px] text-[11.5px] leading-4 text-[#111]">
        <svg viewBox="0 0 12 8" className="h-[7px] w-[11px]" fill="none" stroke="#1a1a1a" strokeWidth="1.5">
          <path d="M1 7l5-5.500L11 7" />
        </svg>
        <div className="ml-[21px] flex flex-col items-center">
          <Fit w={23}>ENG</Fit>
          <Fit w={11}>IN</Fit>
        </div>
        <svg viewBox="0 0 17 17" className="ml-[18px] h-[17px] w-[17px]" fill="none" stroke="#1a1a1a" strokeWidth="1.2">
          <path d="M11 1.500H2.500A1.500 1.500 0 0 0 1 3v8.500A1.500 1.500 0 0 0 2.500 13H13M4 16h8M6 13v3M10 13v3" />
          <path d="M12 2h4v4h-4zM14 6v10" />
        </svg>
        <svg viewBox="0 0 17 13" className="ml-[7px] h-3 w-4" fill="none" stroke="#1a1a1a" strokeWidth="1.2">
          <path d="M1 4.500v4h2.500L7 12V1L3.500 4.500zM10.500 4l5 5M15.500 4l-5 5" />
        </svg>
        <div className="ml-[17px] flex w-[62px] flex-col items-end">
          <Fit w={29}>17:12</Fit>
          <Fit w={62}>28-02-2024</Fit>
        </div>
        <MdNotifications className="ml-1.5 h-[19px] w-[19px] text-[#0a3e91]" />
        <div className="relative ml-[15px] h-[23px] w-[23px]">
          <svg viewBox="0 0 24 24" className="h-[22px] w-[23px]">
            <defs>
              <linearGradient id="copA" x1="0" y1="0" x2="0" y2="1">
                <stop offset="0" stopColor="#2476e0" />
                <stop offset=".6" stopColor="#37b8a0" />
                <stop offset="1" stopColor="#d0d030" />
              </linearGradient>
              <linearGradient id="copB" x1="0" y1="0" x2="0" y2="1">
                <stop offset="0" stopColor="#a46af0" />
                <stop offset="1" stopColor="#f0607a" />
              </linearGradient>
            </defs>
            <path d="M6 1h9c2 0 2.500 1.500 3 3.500h-4c-2 0-3 5-4 9-.5 2-1.500 3-3 3H3c-3 0-3.300-3-2-7.500S3 1 6 1z" fill="url(#copA)" />
            <path d="M18 23H9c-2 0-2.500-1.500-3-3.500h3c2 0 3-5 4-9 .5-2 1.500-3.500 3-3.500h5c3 0 3.300 3 2 7.500S21 23 18 23z" fill="url(#copB)" />
          </svg>
          <span className="absolute right-0 bottom-0 flex h-[7px] w-[18px] items-center justify-center rounded-sm bg-[#fcc419] text-[7px] leading-[7px] font-bold text-black">
            PRE
          </span>
        </div>
      </div>
    </div>
  );
}

export default function App() {
  return (
    <div className="h-[1080px] w-[1920px] overflow-hidden bg-white font-['Open_Sans','Noto_Sans',sans-serif]">
      <TabStrip />
      <Toolbar />
      <Bookmarks />
      <Page />
      <Taskbar />
    </div>
  );
}
